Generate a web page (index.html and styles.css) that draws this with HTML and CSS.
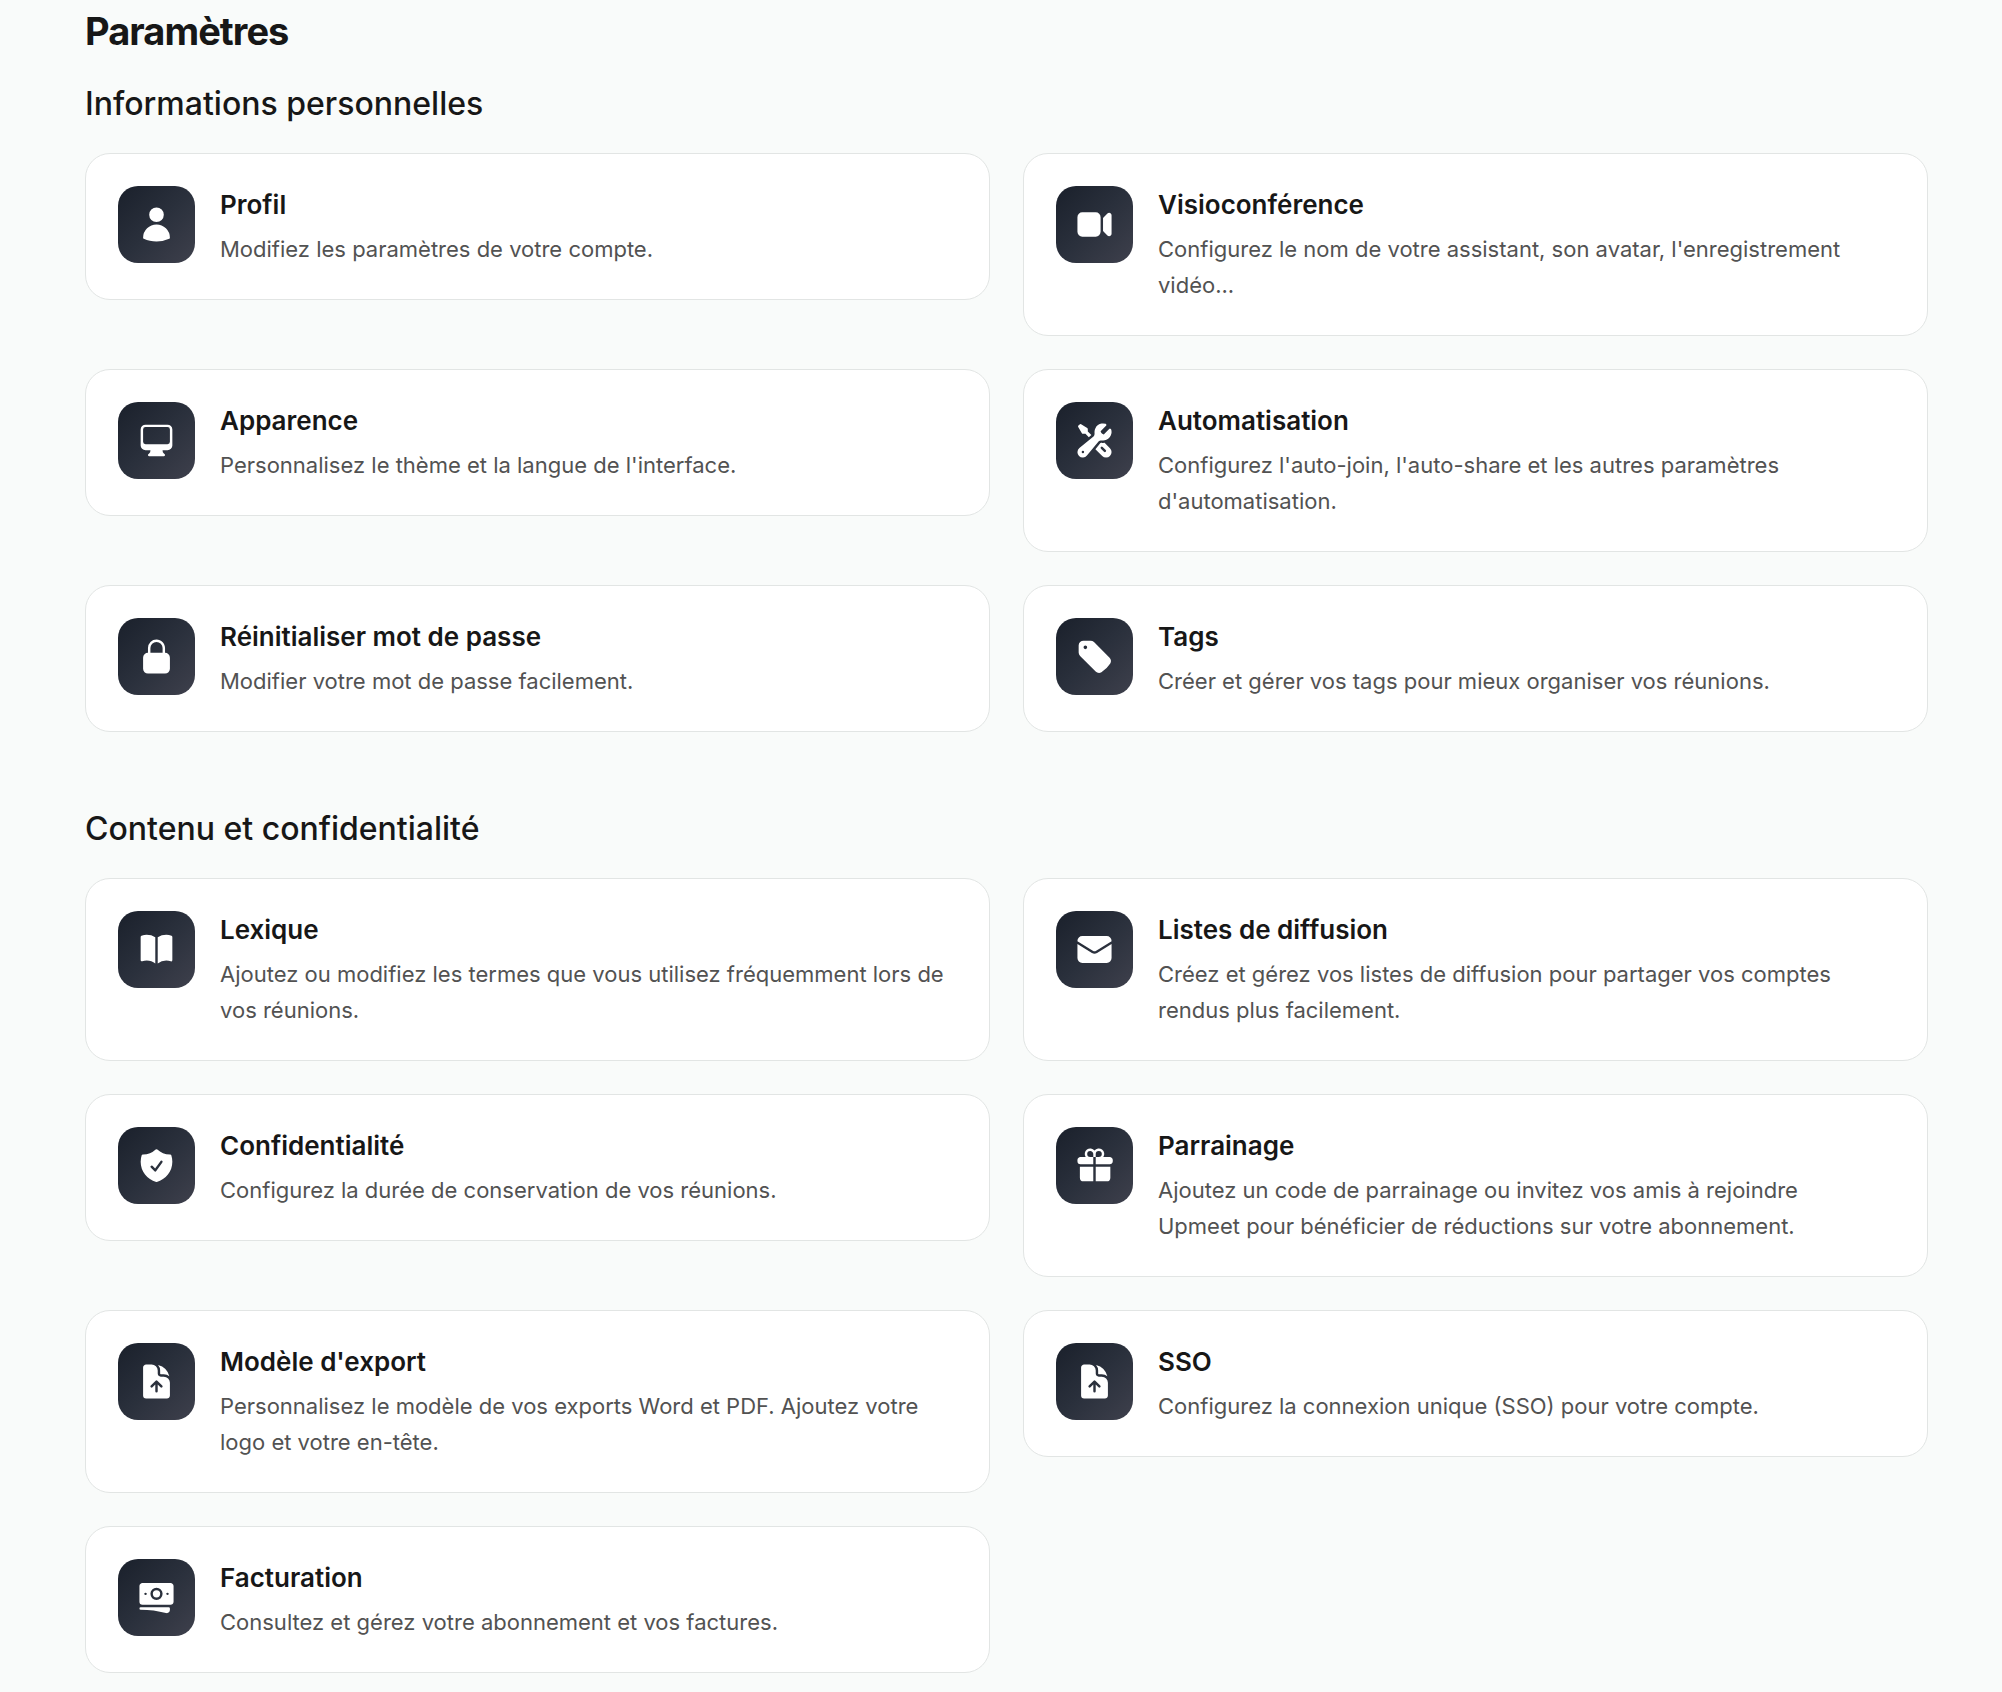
FILE: index.html
```html
<!DOCTYPE html>
<html lang="fr">
<head>
<meta charset="utf-8">
<meta name="viewport" content="width=device-width, initial-scale=1">
<title>Paramètres</title>
<link rel="stylesheet" href="styles.css">
</head>
<body>
<main class="page">
  <h1 class="page-title">Paramètres</h1>

  <section class="section" aria-labelledby="perso">
    <h2 class="section-title" id="perso">Informations personnelles</h2>
    <div class="grid">
      <a class="card" href="#profil">
        <span class="tile"><svg class="icon" viewBox="0 0 24 24" aria-hidden="true"><path d="M7.5 6a4.5 4.5 0 119 0 4.5 4.5 0 01-9 0zM3.751 20.105a8.25 8.25 0 0116.498 0 .75.75 0 01-.437.695A18.683 18.683 0 0112 22.5c-2.786 0-5.433-.608-7.812-1.7a.75.75 0 01-.437-.695z"/></svg></span>
        <div class="card-body"><h3 class="card-title">Profil</h3><p class="card-text">Modifiez les paramètres de votre compte.</p></div>
      </a>
      <a class="card" href="#visio">
        <span class="tile"><svg class="icon" viewBox="0 0 24 24" aria-hidden="true"><path d="M4.5 4.5a3 3 0 00-3 3v9a3 3 0 003 3h8.25a3 3 0 003-3v-9a3 3 0 00-3-3H4.5zM19.94 18.75l-2.69-2.69V7.94l2.69-2.69c.944-.945 2.56-.276 2.56 1.06v11.38c0 1.336-1.616 2.005-2.56 1.06z"/></svg></span>
        <div class="card-body"><h3 class="card-title">Visioconférence</h3><p class="card-text">Configurez le nom de votre assistant, son avatar, l'enregistrement vidéo...</p></div>
      </a>
      <a class="card" href="#apparence">
        <span class="tile"><svg class="icon" viewBox="0 0 24 24" aria-hidden="true"><path d="M2.25 5.25a3 3 0 013-3h13.5a3 3 0 013 3V15a3 3 0 01-3 3h-3v.257c0 .597.237 1.17.659 1.591l.621.622a.75.75 0 01-.53 1.28h-9a.75.75 0 01-.53-1.28l.621-.622a2.25 2.25 0 00.659-1.59V18h-3a3 3 0 01-3-3V5.25zm1.5 0v7.5a1.5 1.5 0 001.5 1.5h13.5a1.5 1.5 0 001.5-1.5v-7.5a1.5 1.5 0 00-1.5-1.5H5.25a1.5 1.5 0 00-1.5 1.5z"/></svg></span>
        <div class="card-body"><h3 class="card-title">Apparence</h3><p class="card-text">Personnalisez le thème et la langue de l'interface.</p></div>
      </a>
      <a class="card" href="#automatisation">
        <span class="tile"><svg class="icon" viewBox="0 0 24 24" aria-hidden="true"><path d="M12 6.75a5.25 5.25 0 016.775-5.025.75.75 0 01.313 1.248l-3.32 3.319c.063.475.276.934.641 1.299.365.365.824.578 1.3.64l3.318-3.319a.75.75 0 011.248.313 5.25 5.25 0 01-5.472 6.756c-1.018-.086-1.87.1-2.309.634L7.344 21.3A3.298 3.298 0 112.7 16.657l8.684-7.151c.533-.44.72-1.291.634-2.309A5.342 5.342 0 0112 6.75zM4.117 19.125a.75.75 0 01.75-.75h.008a.75.75 0 01.75.75v.008a.75.75 0 01-.75.75h-.008a.75.75 0 01-.75-.75v-.008z"/><path d="M10.076 8.64l-2.201-2.2V4.874a.75.75 0 00-.364-.643l-3.75-2.25a.75.75 0 00-.916.113l-.75.75a.75.75 0 00-.113.916l2.25 3.75a.75.75 0 00.643.364h1.564l2.062 2.062 1.575-1.297z"/><path d="M12.556 17.329l4.183 4.182a3.375 3.375 0 004.773-4.773l-3.306-3.305a6.803 6.803 0 01-1.53.043c-.394-.034-.682-.006-.867.042a.589.589 0 00-.167.063l-3.086 3.748zm3.414-1.36a.75.75 0 011.06 0l1.875 1.876a.75.75 0 11-1.06 1.06L15.97 17.03a.75.75 0 010-1.06z"/></svg></span>
        <div class="card-body"><h3 class="card-title">Automatisation</h3><p class="card-text">Configurez l'auto-join, l'auto-share et les autres paramètres d'automatisation.</p></div>
      </a>
      <a class="card" href="#mot-de-passe">
        <span class="tile"><svg class="icon" viewBox="0 0 24 24" aria-hidden="true"><path d="M12 1.5a5.25 5.25 0 00-5.25 5.25v3a3 3 0 00-3 3v6.75a3 3 0 003 3h10.5a3 3 0 003-3v-6.75a3 3 0 00-3-3v-3c0-2.9-2.35-5.25-5.25-5.25zm3.75 8.25v-3a3.75 3.75 0 10-7.5 0v3h7.5z"/></svg></span>
        <div class="card-body"><h3 class="card-title">Réinitialiser mot de passe</h3><p class="card-text">Modifier votre mot de passe facilement.</p></div>
      </a>
      <a class="card" href="#tags">
        <span class="tile"><svg class="icon" viewBox="0 0 24 24" aria-hidden="true"><path d="M5.25 2.25a3 3 0 00-3 3v4.318a3 3 0 00.879 2.121l9.58 9.581c.92.92 2.39 1.186 3.548.428a18.849 18.849 0 005.441-5.44c.758-1.16.492-2.629-.428-3.548l-9.58-9.581a3 3 0 00-2.122-.879H5.25zM6.375 7.5a1.125 1.125 0 100-2.25 1.125 1.125 0 000 2.25z"/></svg></span>
        <div class="card-body"><h3 class="card-title">Tags</h3><p class="card-text">Créer et gérer vos tags pour mieux organiser vos réunions.</p></div>
      </a>
    </div>
  </section>

  <section class="section" aria-labelledby="contenu">
    <h2 class="section-title" id="contenu">Contenu et confidentialité</h2>
    <div class="grid">
      <a class="card" href="#lexique">
        <span class="tile"><svg class="icon" viewBox="0 0 24 24" aria-hidden="true"><path d="M11.25 4.533A9.707 9.707 0 006 3a9.735 9.735 0 00-3.25.555.75.75 0 00-.5.707v14.25a.75.75 0 001 .707A8.237 8.237 0 016 18.75c1.995 0 3.823.707 5.25 1.886V4.533zM12.75 20.636A8.214 8.214 0 0118 18.75c.966 0 1.89.166 2.75.47a.75.75 0 001-.708V4.262a.75.75 0 00-.5-.707A9.735 9.735 0 0018 3a9.707 9.707 0 00-5.25 1.533v16.103z"/></svg></span>
        <div class="card-body"><h3 class="card-title">Lexique</h3><p class="card-text">Ajoutez ou modifiez les termes que vous utilisez fréquemment lors de vos réunions.</p></div>
      </a>
      <a class="card" href="#listes">
        <span class="tile"><svg class="icon" viewBox="0 0 24 24" aria-hidden="true"><path d="M1.5 8.67v8.58a3 3 0 003 3h15a3 3 0 003-3V8.67l-8.928 5.493a3 3 0 01-3.144 0L1.5 8.67z"/><path d="M22.5 6.908V6.75a3 3 0 00-3-3h-15a3 3 0 00-3 3v.158l9.714 5.978a1.5 1.5 0 001.572 0L22.5 6.908z"/></svg></span>
        <div class="card-body"><h3 class="card-title">Listes de diffusion</h3><p class="card-text">Créez et gérez vos listes de diffusion pour partager vos comptes rendus plus facilement.</p></div>
      </a>
      <a class="card" href="#confidentialite">
        <span class="tile"><svg class="icon" viewBox="0 0 24 24" aria-hidden="true"><path d="M12.516 2.17a.75.75 0 00-1.032 0 11.209 11.209 0 01-7.877 3.08.75.75 0 00-.722.515A12.74 12.74 0 002.25 9.75c0 5.942 4.064 10.933 9.563 12.348a.749.749 0 00.374 0c5.499-1.415 9.563-6.406 9.563-12.348 0-1.39-.223-2.73-.635-3.985a.75.75 0 00-.722-.516l-.143.001c-2.996 0-5.717-1.17-7.734-3.08zm3.094 8.016a.75.75 0 10-1.22-.872l-3.236 4.53L9.53 12.22a.75.75 0 00-1.06 1.06l2.25 2.25a.75.75 0 001.14-.094l3.75-5.25z"/></svg></span>
        <div class="card-body"><h3 class="card-title">Confidentialité</h3><p class="card-text">Configurez la durée de conservation de vos réunions.</p></div>
      </a>
      <a class="card" href="#parrainage">
        <span class="tile"><svg class="icon" viewBox="0 0 24 24" aria-hidden="true"><path d="M9.375 3a1.875 1.875 0 000 3.75h1.875v4.5H3.375A1.875 1.875 0 011.5 9.375v-.75c0-1.036.84-1.875 1.875-1.875h3.193A3.375 3.375 0 0112 2.753a3.375 3.375 0 015.432 3.997h3.943c1.035 0 1.875.84 1.875 1.875v.75c0 1.036-.84 1.875-1.875 1.875H12.75v-4.5h1.875a1.875 1.875 0 10-1.875-1.875V6.75h-1.5V4.875C11.25 3.839 10.41 3 9.375 3zM11.25 12.75H3v6.75a2.25 2.25 0 002.25 2.25h6v-9zM12.75 12.75v9h6.75a2.25 2.25 0 002.25-2.25v-6.75h-9z"/></svg></span>
        <div class="card-body"><h3 class="card-title">Parrainage</h3><p class="card-text">Ajoutez un code de parrainage ou invitez vos amis à rejoindre Upmeet&nbsp;pour bénéficier de réductions sur votre abonnement.</p></div>
      </a>
      <a class="card" href="#export">
        <span class="tile"><svg class="icon" viewBox="0 0 24 24" aria-hidden="true"><path d="M5.625 1.5H9a3.75 3.75 0 013.75 3.75v1.875c0 1.036.84 1.875 1.875 1.875H16.5a3.75 3.75 0 013.75 3.75v7.875c0 1.035-.84 1.875-1.875 1.875H5.625a1.875 1.875 0 01-1.875-1.875V3.375c0-1.036.84-1.875 1.875-1.875zm6.905 9.97a.75.75 0 00-1.06 0l-3 3a.75.75 0 101.06 1.06l1.72-1.72V18a.75.75 0 001.5 0v-4.19l1.72 1.72a.75.75 0 101.06-1.06l-3-3z"/><path d="M14.25 5.25a5.23 5.23 0 00-1.279-3.434 9.768 9.768 0 016.963 6.963A5.23 5.23 0 0016.5 7.5h-1.875a.375.375 0 01-.375-.375V5.25z"/></svg></span>
        <div class="card-body"><h3 class="card-title">Modèle d'export</h3><p class="card-text">Personnalisez le modèle de vos exports Word et PDF. Ajoutez votre logo et votre en-tête.</p></div>
      </a>
      <a class="card" href="#sso">
        <span class="tile"><svg class="icon" viewBox="0 0 24 24" aria-hidden="true"><path d="M5.625 1.5H9a3.75 3.75 0 013.75 3.75v1.875c0 1.036.84 1.875 1.875 1.875H16.5a3.75 3.75 0 013.75 3.75v7.875c0 1.035-.84 1.875-1.875 1.875H5.625a1.875 1.875 0 01-1.875-1.875V3.375c0-1.036.84-1.875 1.875-1.875zm6.905 9.97a.75.75 0 00-1.06 0l-3 3a.75.75 0 101.06 1.06l1.72-1.72V18a.75.75 0 001.5 0v-4.19l1.72 1.72a.75.75 0 101.06-1.06l-3-3z"/><path d="M14.25 5.25a5.23 5.23 0 00-1.279-3.434 9.768 9.768 0 016.963 6.963A5.23 5.23 0 0016.5 7.5h-1.875a.375.375 0 01-.375-.375V5.25z"/></svg></span>
        <div class="card-body"><h3 class="card-title">SSO</h3><p class="card-text">Configurez la connexion unique (SSO) pour votre compte.</p></div>
      </a>
      <a class="card" href="#facturation">
        <span class="tile"><svg class="icon" viewBox="0 0 24 24" aria-hidden="true"><path d="M12 7.5a2.25 2.25 0 100 4.5 2.25 2.25 0 000-4.5z"/><path d="M1.5 4.875C1.5 3.839 2.34 3 3.375 3h17.25c1.035 0 1.875.84 1.875 1.875v9.75c0 1.036-.84 1.875-1.875 1.875H3.375A1.875 1.875 0 011.5 14.625v-9.75zM8.25 9.75a3.75 3.75 0 117.5 0 3.75 3.75 0 01-7.5 0zM18.75 9a.75.75 0 00-.75.75v.008c0 .414.336.75.75.75h.008a.75.75 0 00.75-.75V9.75a.75.75 0 00-.75-.75h-.008zM4.5 9.75A.75.75 0 015.25 9h.008a.75.75 0 01.75.75v.008a.75.75 0 01-.75.75H5.25a.75.75 0 01-.75-.75V9.75z"/><path d="M2.25 18a.75.75 0 000 1.5c5.4 0 10.63.722 15.6 2.075 1.19.324 2.4-.558 2.4-1.82V18.75a.75.75 0 00-.75-.75H2.25z"/></svg></span>
        <div class="card-body"><h3 class="card-title">Facturation</h3><p class="card-text">Consultez et gérez votre abonnement et vos factures.</p></div>
      </a>
    </div>
  </section>
</main>
</body>
</html>
```

FILE: styles.css
```css
*,
*::before,
*::after {
  box-sizing: border-box;
}

body {
  margin: 0;
  background: #f9fbfa;
  color: #171717;
  font-family: Inter, "Liberation Sans", sans-serif;
}

h1,
h2,
h3,
p {
  margin: 0;
}

.page {
  padding: 0 74px 18px 85px;
}

.page-title {
  margin-bottom: 18px;
  font-size: 38px;
  font-weight: 700;
  line-height: 62px;
  letter-spacing: -0.025em;
}

.section + .section {
  margin-top: 73px;
}

.section-title {
  margin-bottom: 25px;
  font-size: 32px;
  font-weight: 500;
  line-height: 48px;
}

.grid {
  display: grid;
  grid-template-columns: 1fr 1fr;
  gap: 33px;
  align-items: start;
}

.card {
  display: flex;
  align-items: flex-start;
  gap: 25px;
  padding: 32px;
  border: 1px solid #e2e5e4;
  border-radius: 25px;
  background: #fff;
  color: inherit;
  text-decoration: none;
}

.tile {
  display: flex;
  flex: none;
  align-items: center;
  justify-content: center;
  width: 77px;
  height: 77px;
  border-radius: 20px;
  background: linear-gradient(135deg, #1a202b, #2a303c 50%, #3e404c);
}

.icon {
  width: 39px;
  height: 39px;
  fill: #fff;
  fill-rule: evenodd;
}

.card-body {
  flex: 1;
  min-width: 0;
}

.card-title {
  margin-bottom: 8px;
  font-size: 26px;
  font-weight: 600;
  line-height: 37px;
}

.card-text {
  color: #525252;
  font-size: 22px;
  line-height: 36px;
}
```
